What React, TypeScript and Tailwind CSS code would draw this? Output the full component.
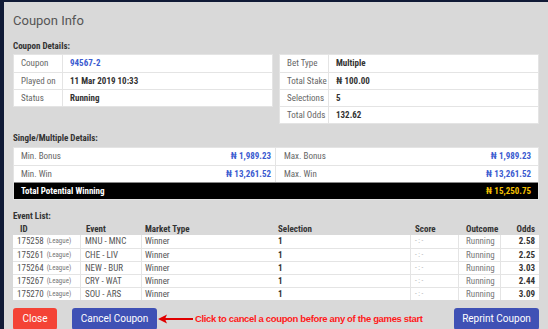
const cond = { fontFamily: '"Roboto Condensed","DejaVu Sans Condensed","Liberation Sans Narrow",Roboto,sans-serif' };

const events = [
  { id: "175258", ev: "MNU - MNC", odds: "2.58" },
  { id: "175261", ev: "CHE - LIV", odds: "2.25" },
  { id: "175264", ev: "NEW - BUR", odds: "3.03" },
  { id: "175267", ev: "CRY - WAT", odds: "2.44" },
  { id: "175270", ev: "SOU - ARS", odds: "3.09" },
];

function KV({ rows }: { rows: [string, string, string?][] }) {
  return (
    <div className="bg-white border border-[#e4e4e4]">
      {rows.map(([k, v, c], i) => (
        <div key={k} className={`flex h-[17px] items-center ${i > 0 ? "border-t border-[#e4e4e4]" : ""}`}>
          <div className="w-[49px] h-full flex items-center pl-[7px] border-r border-[#e4e4e4] text-[#666]">{k}</div>
          <div className={`pl-[7px] font-bold ${c ?? "text-[#333]"}`}>{v}</div>
        </div>
      ))}
    </div>
  );
}

export default function App() {
  return (
    <div className="w-[548px] h-[329px] overflow-hidden bg-[#101a36] pl-[4px] pt-[2px]" style={cond}>
      <div className="h-[327px] bg-[#d9d9d9] px-[9px] text-[9px] leading-none">
        <div className="h-[36px] flex items-center text-[13px] text-[#555]" style={{ fontFamily: "Roboto, sans-serif" }}>Coupon Info</div>
        <div className="h-[16px] flex items-center font-bold text-[#333]">Coupon Details:</div>
        <div className="grid grid-cols-2 gap-[6px] items-start">
          <KV rows={[["Coupon", "94567-2", "text-[#3b5bd0]"], ["Played on", "11 Mar 2019 10:33"], ["Status", "Running"]]} />
          <KV rows={[["Bet Type", "Multiple"], ["Total Stake", "₦ 100.00"], ["Selections", "5"], ["Total Odds", "132.62"]]} />
        </div>
        <div className="mt-[5px] h-[18px] flex items-center font-bold text-[#333]">Single/Multiple Details:</div>
        <div className="bg-white border border-[#e4e4e4]">
          <div className="grid grid-cols-2 h-[17px]">
            <div className="flex items-center justify-between pl-[7px] pr-[4px] border-r border-[#e4e4e4]">
              <span className="text-[#666]">Min. Bonus</span>
              <span className="font-bold text-[#3b5bd0]">₦ 1,989.23</span>
            </div>
            <div className="flex items-center justify-between pl-[8px] pr-[7px]">
              <span className="text-[#666]">Max. Bonus</span>
              <span className="font-bold text-[#3b5bd0]">₦ 1,989.23</span>
            </div>
          </div>
          <div className="grid grid-cols-2 h-[17px] border-t border-[#e4e4e4]">
            <div className="flex items-center justify-between pl-[7px] pr-[4px] border-r border-[#e4e4e4]">
              <span className="text-[#666]">Min. Win</span>
              <span className="font-bold text-[#3b5bd0]">₦ 13,261.52</span>
            </div>
            <div className="flex items-center justify-between pl-[8px] pr-[7px]">
              <span className="text-[#666]">Max. Win</span>
              <span className="font-bold text-[#3b5bd0]">₦ 13,261.52</span>
            </div>
          </div>
          <div className="h-[17px] bg-black border-t border-[#888] flex items-center justify-between pl-[7px] pr-[7px] font-bold">
            <span className="text-white">Total Potential Winning</span>
            <span className="text-[#f5c000]">₦ 15,250.75</span>
          </div>
        </div>
        <div className="mt-[8px] h-[16px] flex items-center font-bold text-[#333]">Event List:</div>
        <div className="grid grid-cols-[68px_61px_133px_136px_48px_42px_38px] h-[11px] items-center font-bold text-[#333]">
          <div className="pl-[7px]">ID</div>
          <div className="pl-[5px]">Event</div>
          <div className="pl-[3px]">Market Type</div>
          <div className="pl-[3px]">Selection</div>
          <div className="pl-[4px]">Score</div>
          <div className="pl-[7px]">Outcome</div>
          <div className="text-right pr-[4px]">Odds</div>
        </div>
        <div className="bg-white">
          {events.map((e, i) => (
            <div key={e.id} className={`grid grid-cols-[68px_61px_133px_136px_48px_42px_38px] h-[13px] items-center ${i > 0 ? "border-t border-[#e4e4e4]" : ""}`}>
              <div className="pl-[4px] h-full flex items-center border-r border-[#e4e4e4] text-[#555]">
                {e.id}<span className="ml-[3px] text-[7px] text-[#777]">(League)</span>
              </div>
              <div className="pl-[4px] h-full flex items-center border-r border-[#e4e4e4] text-[#555]">{e.ev}</div>
              <div className="pl-[3px] h-full flex items-center text-[#555]">Winner</div>
              <div className="pl-[3px] h-full flex items-center border-r border-[#e4e4e4] font-bold text-[#333]">1</div>
              <div className="pl-[4px] h-full flex items-center border-r border-[#e4e4e4] text-[#aaa] text-[7px]">- : -</div>
              <div className="pl-[7px] h-full flex items-center border-r border-[#e4e4e4] text-[#777]">Running</div>
              <div className="pr-[4px] h-full flex items-center justify-end font-bold text-[#333]">{e.odds}</div>
            </div>
          ))}
        </div>
        <div className="mt-[8px] h-[22px] flex items-center" style={{ fontFamily: "Roboto, sans-serif" }}>
          <button className="w-[44px] h-[22px] rounded-[3px] bg-[#f44336] text-white text-[10px]">Close</button>
          <button className="ml-[15px] w-[85px] h-[22px] rounded-[3px] bg-[#3f51b5] text-white text-[10px]">Cancel Coupon</button>
          <svg width="36" height="10" viewBox="0 0 36 10" className="ml-[1px] shrink-0">
            <path d="M6 5 H35" stroke="#e00000" strokeWidth="2" />
            <path d="M0 5 L9 0.5 L7 5 L9 9.5 Z" fill="#e00000" />
          </svg>
          <span className="ml-[1px] whitespace-nowrap text-[9.5px] font-bold text-[#ff1a1a] tracking-[-0.35px]" style={{ fontFamily: '"Liberation Sans",Arial,sans-serif' }}>
            Click to cancel a coupon before any of the games start
          </span>
          <button className="ml-auto w-[85px] h-[22px] rounded-[3px] bg-[#3f51b5] text-white text-[10px]">Reprint Coupon</button>
        </div>
      </div>
    </div>
  );
}
